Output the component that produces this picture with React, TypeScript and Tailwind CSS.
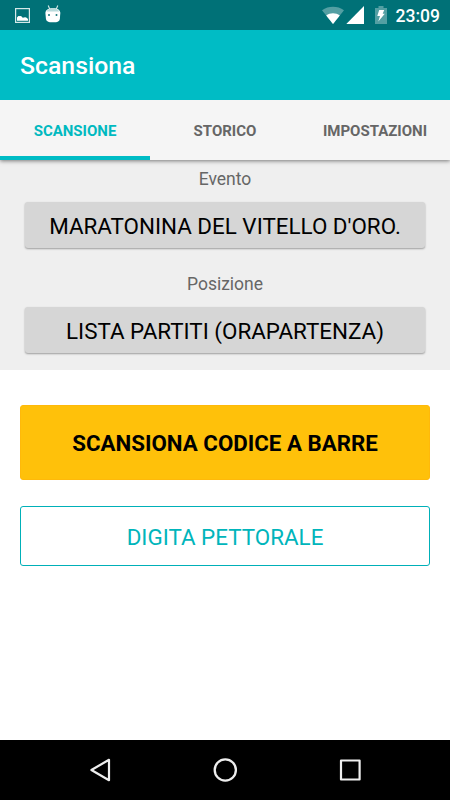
import type { ReactNode } from "react";

function PictureIcon() {
  return (
    <svg width="15" height="15" viewBox="0 0 15 15" className="block">
      <rect x="0.6" y="0.6" width="13.8" height="13.8" fill="none" stroke="#d5e8e8" strokeWidth="1.2" />
      <path d="M2 12.7V9.6C2.6 8.2 3.8 7.6 5 8.2C6 7.6 6.9 8.5 7.4 9.6C8.3 10 9 9.2 10.2 9.3C11.5 9.4 12.6 10.4 13 11.3V12.7Z" fill="#fff" />
    </svg>
  );
}

function DroidIcon() {
  return (
    <svg width="16" height="18" viewBox="0 0 16 18" className="block">
      <path d="M3.2 0.5L4.7 4M12.8 0.5L11.3 4" stroke="#d5e8e8" strokeWidth="1.1" />
      <path d="M0.4 8C0.5 5.2 3 3.2 8 3.2S15.2 5.2 15.3 8L14.9 13.5C14.6 16.6 12.6 17.3 8 17.3S1.2 16.6 0.9 13.5Z" fill="#fff" />
      <path d="M1.5 6.5C2.7 4.2 5 3.3 8 3.3S13 4.2 14.2 6.5Z" fill="#b9dadb" />
      <circle cx="4" cy="10" r="1" fill="#16767b" />
      <circle cx="11.5" cy="10" r="1" fill="#16767b" />
    </svg>
  );
}

function WifiIcon() {
  return (
    <svg width="22" height="18" viewBox="0 0 22 18" className="block">
      <path d="M0 4.2C6.5 -0.4 15.5 -0.4 22 4.2L11 18Z" fill="#fff" fillOpacity="0.33" />
      <path d="M4.2 9.4C8.2 6.4 13.8 6.4 17.8 9.4L11 18Z" fill="#fff" />
    </svg>
  );
}

function BatteryIcon() {
  return (
    <svg width="12" height="18" viewBox="0 0 12 18" className="block">
      <path d="M3.5 0H8.5V2H12V18H0V2H3.5Z" fill="#fff" fillOpacity="0.33" />
      <path d="M4.2 4H9.2L7.7 7.7H9.8L3.3 15.5L5 10H2.3Z" fill="#fff" />
    </svg>
  );
}

function Tab({ label, active = false }: { label: string; active?: boolean }) {
  return (
    <button
      className={`flex h-[60px] w-[150px] items-center justify-center border-y-4 border-t-transparent pt-[2px] text-[15px] font-bold leading-5 ${
        active ? "border-b-[#00bcc5] text-[#00b9c0]" : "border-b-transparent text-[#666]"
      }`}
    >
      {label}
    </button>
  );
}

function Picker({ label, children }: { label: string; children: ReactNode }) {
  return (
    <div className="flex h-[105px] flex-col px-[25px] pt-[9px]">
      <div className="h-[21px] text-center text-[17.5px] leading-[21px] text-[#666]">{label}</div>
      <button className="mt-3 flex h-[46px] shrink-0 items-center justify-center whitespace-nowrap rounded-[3px] bg-[#d6d6d6] pt-[2px] text-[22.4px] leading-none text-black shadow-[0_1px_2px_rgba(0,0,0,0.35)]">
        {children}
      </button>
    </div>
  );
}

export default function App() {
  return (
    <div className="flex h-[800px] w-[450px] flex-col overflow-hidden bg-white font-['Roboto',sans-serif]">
      <div className="flex h-[30px] shrink-0 items-center justify-between bg-[#007177] pl-[15px] pr-[10px]">
        <div className="flex items-center gap-[15px]">
          <PictureIcon />
          <div className="-mt-[2px]"><DroidIcon /></div>
        </div>
        <div className="flex items-center">
          <WifiIcon />
          <svg width="18" height="18" viewBox="0 0 18 18" className="ml-[2px] block">
            <path d="M18 0V18H0.3Z" fill="#fff" />
          </svg>
          <div className="ml-[11px]"><BatteryIcon /></div>
          <span className="ml-[9px] mt-px text-[17.5px] font-medium leading-5 text-white">23:09</span>
        </div>
      </div>

      <header className="z-20 flex h-[70px] shrink-0 items-center bg-[#00bcc5] pl-5 pt-[2px]">
        <h1 className="text-[24.8px] font-medium leading-[30px] text-white">Scansiona</h1>
      </header>

      <nav className="z-10 flex h-[60px] shrink-0 bg-[#f5f5f5] shadow-[0_1px_4px_rgba(0,0,0,0.5)]">
        <Tab label="SCANSIONE" active />
        <Tab label="STORICO" />
        <Tab label="IMPOSTAZIONI" />
      </nav>

      <section className="h-[210px] shrink-0 bg-[#efefef]">
        <Picker label="Evento">MARATONINA DEL VITELLO D'ORO.</Picker>
        <Picker label="Posizione">LISTA PARTITI (ORAPARTENZA)</Picker>
      </section>

      <main className="flex flex-1 flex-col px-5 pt-[35px]">
        <button className="flex h-[75px] items-center justify-center rounded-[3px] border border-[#ffb90a] bg-[#ffc10a] pt-[2px] text-[22.3px] font-bold leading-none text-black">
          SCANSIONA CODICE A BARRE
        </button>
        <button className="mt-[26px] flex h-[60px] items-center justify-center rounded-[3px] border border-[#00b0b8] bg-white pt-[2px] text-[22.4px] leading-none text-[#00b5bb]">
          DIGITA PETTORALE
        </button>
      </main>

      <footer className="flex h-[60px] shrink-0 items-center justify-center bg-black">
        <svg width="125" height="60" viewBox="0 0 125 60" fill="none" stroke="#eee" strokeWidth="2.2" strokeLinejoin="round">
          <path d="M53.4 30L71 19.8V40.2Z" />
        </svg>
        <svg width="125" height="60" viewBox="0 0 125 60" fill="none" stroke="#eee" strokeWidth="2.3">
          <circle cx="62.3" cy="30" r="10.6" />
        </svg>
        <svg width="125" height="60" viewBox="0 0 125 60" fill="none" stroke="#eee" strokeWidth="2.2" strokeLinejoin="round">
          <rect x="53" y="20.5" width="18.6" height="19" />
        </svg>
      </footer>
    </div>
  );
}
